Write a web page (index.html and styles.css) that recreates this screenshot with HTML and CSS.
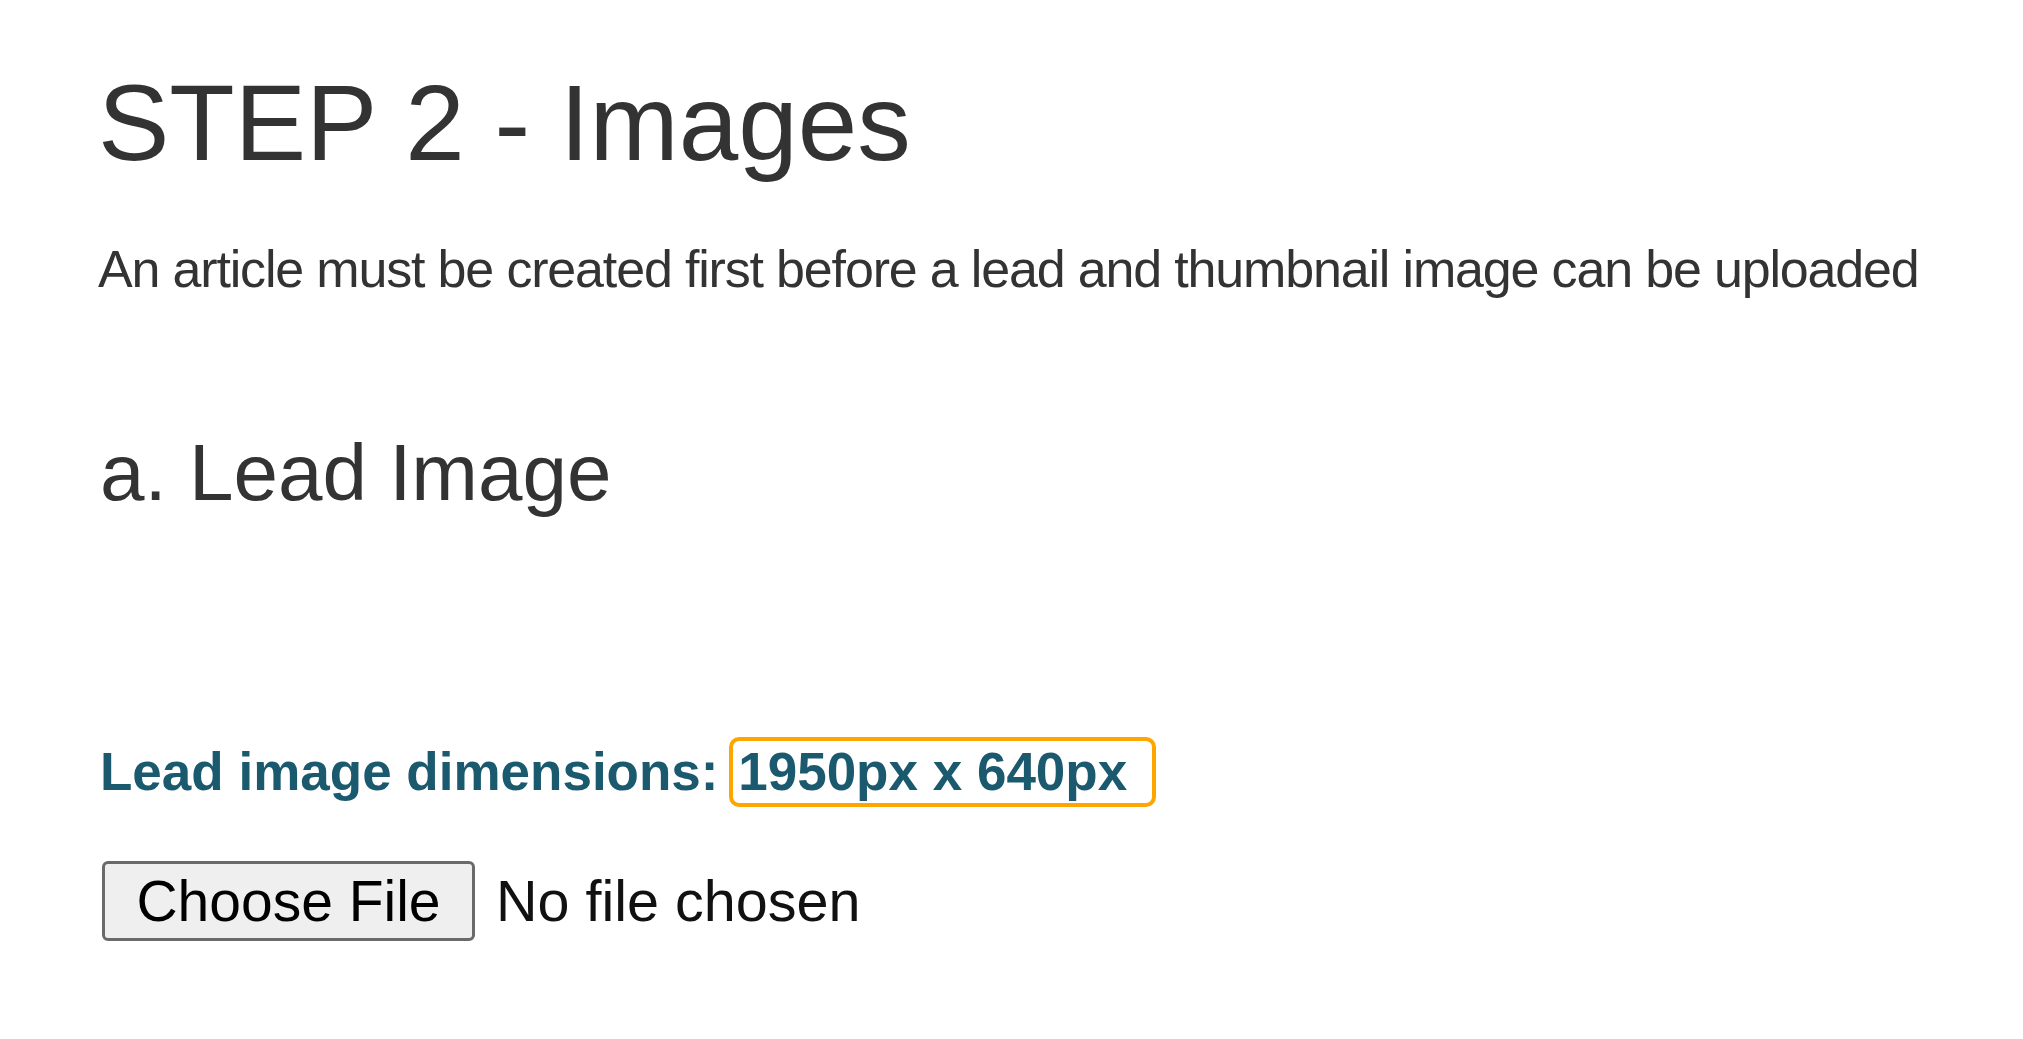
FILE: index.html
```html
<!DOCTYPE html>
<html>
<head>
<meta charset="utf-8">
<link rel="stylesheet" href="styles.css">
</head>
<body>
<div class="page">
  <h1 class="title">STEP 2 - Images</h1>
  <p class="note">An article must be created first before a lead and thumbnail image can be uploaded</p>
  <h3 class="subtitle">a. Lead Image</h3>
  <div class="dims">Lead image dimensions: <span class="hl">1950px x 640px</span></div>
  <div class="file">
    <button class="file-btn" type="button">Choose File</button>
    <span class="file-name">No file chosen</span>
  </div>
</div>
</body>
</html>
```

FILE: styles.css
```css
html, body {
  margin: 0;
  padding: 0;
  background: #ffffff;
}
.page {
  padding: 0 0 0 98px;
  font-family: "Liberation Sans", Arial, sans-serif;
  color: #333333;
}
.title {
  margin: 64px 0 0 0;
  font-size: 107px;
  font-weight: normal;
  line-height: 119px;
}
.note {
  margin: 56px 0 0 0;
  font-size: 52px;
  line-height: 60px;
  letter-spacing: -1.17px;
}
.subtitle {
  margin: 130px 0 0 2px;
  font-size: 80px;
  font-weight: normal;
  line-height: 88px;
}
.dims {
  margin: 220px 0 0 2px;
  font-size: 53px;
  font-weight: bold;
  line-height: 60px;
  color: #1b5a6e;
}
.hl {
  display: inline-block;
  border: 4px solid #ffa500;
  border-radius: 10px;
  padding: 1px 25px 1px 5px;
  line-height: 60px;
  margin-left: -4px;
}
.file {
  margin: 54px 0 0 4px;
  display: flex;
  align-items: center;
  gap: 21px;
}
.file-btn {
  box-sizing: border-box;
  width: 373px;
  height: 80px;
  background: #efefef;
  border: 3px solid #6a6a6a;
  border-radius: 6px;
  font-family: "Liberation Sans", Arial, sans-serif;
  font-size: 57px;
  color: #000000;
  padding: 0;
}
.file-name {
  font-size: 57.5px;
  color: #111111;
}
```
